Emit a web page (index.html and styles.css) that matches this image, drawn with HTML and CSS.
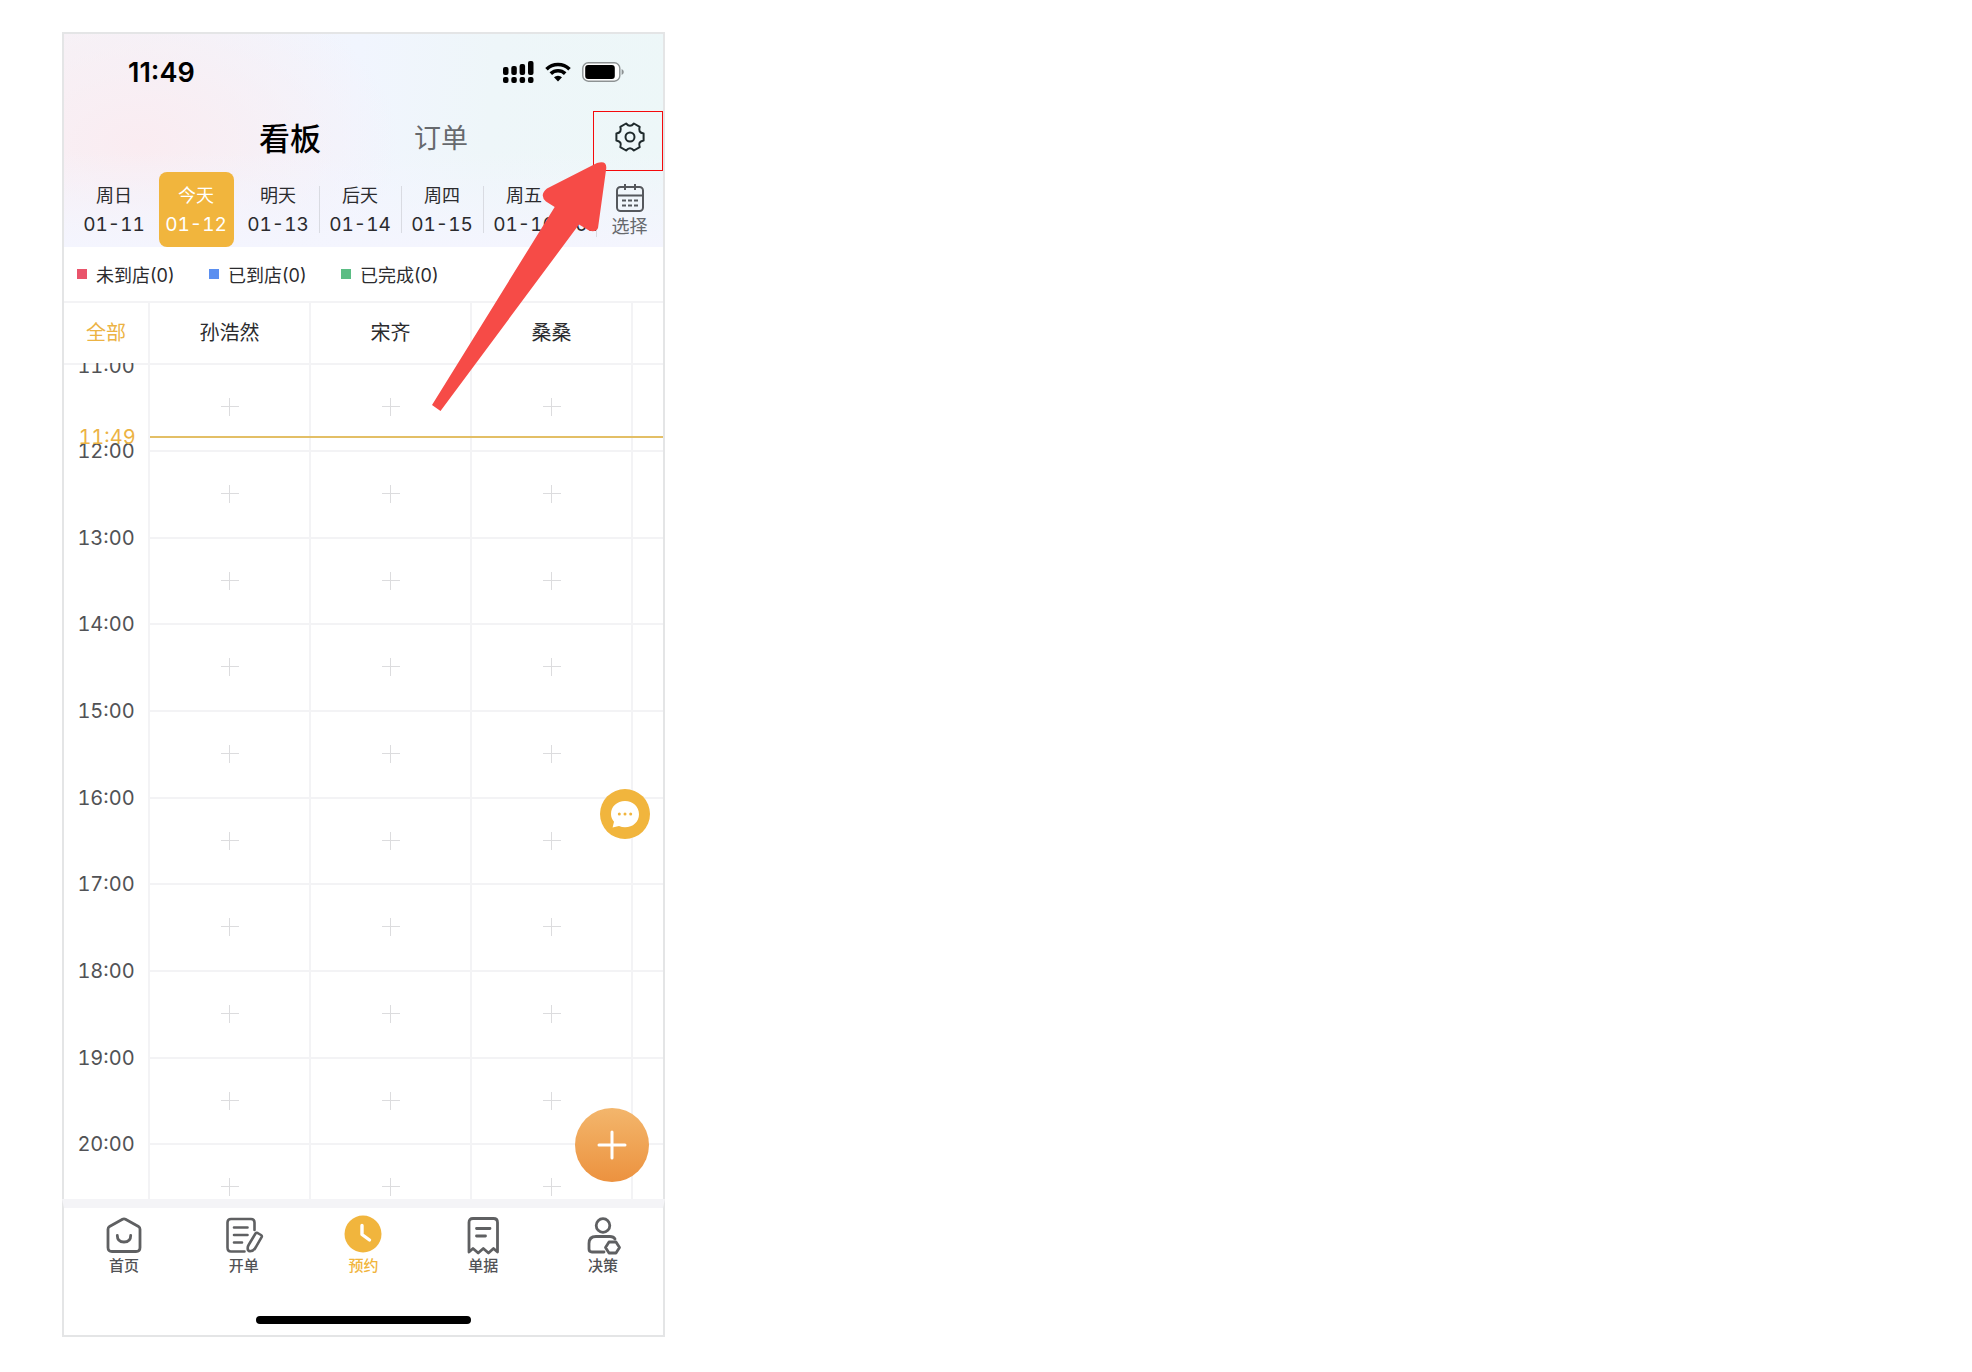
FILE: index.html
```html
<!DOCTYPE html>
<html lang="zh-CN">
<head>
<meta charset="utf-8">
<meta name="viewport" content="width=device-width, initial-scale=1">
<title>预约看板</title>
<link rel="stylesheet" href="styles.css">
</head>
<body>
<main class="phone">
  <header class="top">
    <div class="status">
      <span class="status-time">11:49</span>
      <span class="status-icons">
        <svg width="32" height="22" viewBox="0 0 32 22"><g fill="#000"><rect x="1" y="6" width="5.500" height="8" rx="2"/><rect x="9.300" y="5" width="5.500" height="9" rx="2"/><rect x="17.600" y="3" width="5.500" height="11" rx="2"/><rect x="26" y="0" width="5.500" height="14" rx="2"/><rect x="1" y="16" width="5.500" height="6" rx="2"/><rect x="9.300" y="16" width="5.500" height="6" rx="2"/><rect x="17.600" y="16" width="5.500" height="6" rx="2"/><rect x="26" y="16" width="5.500" height="6" rx="2"/></g></svg>
        <svg width="26" height="20" viewBox="0 0 26 20"><g fill="none" stroke="#000" stroke-width="3.6"><path d="M1.500 7.200a16.500 16.500 0 0 1 23 0"/><path d="M5.800 11.600a10.400 10.400 0 0 1 14.400 0"/></g><path d="M13 19.500l-4-4.200a5.800 5.800 0 0 1 8 0z" fill="#000"/></svg>
        <svg width="42" height="20" viewBox="0 0 42 20"><rect x="0.800" y="0.800" width="37" height="18.400" rx="5.500" fill="#fff" stroke="#8d9293" stroke-width="1.400"/><rect x="3.200" y="3" width="29.600" height="14" rx="3" fill="#000"/><path d="M39.600 7v6q2.200-1 2.200-3t-2.200-3z" fill="#8d9293"/></svg>
      </span>
    </div>
    <nav class="views">
      <button class="view view-on" type="button">看板</button>
      <button class="view" type="button">订单</button>
      <button class="gear" type="button" aria-label="设置">
        <svg width="30" height="30" viewBox="0 0 30 30" fill="none" stroke="#1f2a2c" stroke-width="2" stroke-linejoin="round"><path d="M18.900 1.500L24.700 4.900Q22.700 10.500 28.600 11.600V18.400Q22.700 19.500 24.700 25.100L18.900 28.500Q15 23.900 11.100 28.500L5.300 25.100Q7.300 19.500 1.400 18.400V11.600Q7.300 10.500 5.300 4.900L11.100 1.500Q15 6.100 18.900 1.500Z"/><circle cx="15" cy="15" r="4.500"/></svg>
      </button>
    </nav>
    <div class="days">
      <ul class="day-list">
        <li><button class="day" type="button"><span>周日</span><span class="num">01-11</span></button></li>
        <li><button class="day day-on" type="button"><span>今天</span><span class="num">01-12</span></button></li>
        <li><button class="day" type="button"><span>明天</span><span class="num">01-13</span></button></li>
        <li class="ruled"><button class="day" type="button"><span>后天</span><span class="num">01-14</span></button></li>
        <li class="ruled"><button class="day" type="button"><span>周四</span><span class="num">01-15</span></button></li>
        <li class="ruled"><button class="day" type="button"><span>周五</span><span class="num">01-16</span></button></li>
        <li class="ruled"><button class="day" type="button"><span>周六</span><span class="num">01-17</span></button></li>
      </ul>
      <button class="picker" type="button">
        <svg width="30" height="30" viewBox="0 0 30 30" fill="none" stroke="#55585d" stroke-width="2"><rect x="2" y="4" width="26" height="24" rx="3.500"/><path d="M2 12.500h26M10 1v6M20 1v6"/><path d="M7 17.500h4M13 17.500h4M19 17.500h4M7 22.500h4M13 22.500h4M19 22.500h4"/></svg>
        <span>选择</span>
      </button>
    </div>
  </header>

  <ul class="legend">
    <li class="waiting">未到店(0)</li>
    <li class="arrived">已到店(0)</li>
    <li class="done">已完成(0)</li>
  </ul>

  <section class="board">
    <table class="schedule">
      <colgroup><col class="col-time"><col class="col-staff"><col class="col-staff"><col class="col-staff"><col></colgroup>
      <thead>
        <tr><th class="all">全部</th><th>孙浩然</th><th>宋齐</th><th>桑桑</th><th></th></tr>
      </thead>
      <tbody>
        <tr><th><time>11:00</time></th><td><button type="button" aria-label="新增预约"></button></td><td><button type="button" aria-label="新增预约"></button></td><td><button type="button" aria-label="新增预约"></button></td><td></td></tr>
        <tr><th><time>12:00</time></th><td><button type="button" aria-label="新增预约"></button></td><td><button type="button" aria-label="新增预约"></button></td><td><button type="button" aria-label="新增预约"></button></td><td></td></tr>
        <tr><th><time>13:00</time></th><td><button type="button" aria-label="新增预约"></button></td><td><button type="button" aria-label="新增预约"></button></td><td><button type="button" aria-label="新增预约"></button></td><td></td></tr>
        <tr><th><time>14:00</time></th><td><button type="button" aria-label="新增预约"></button></td><td><button type="button" aria-label="新增预约"></button></td><td><button type="button" aria-label="新增预约"></button></td><td></td></tr>
        <tr><th><time>15:00</time></th><td><button type="button" aria-label="新增预约"></button></td><td><button type="button" aria-label="新增预约"></button></td><td><button type="button" aria-label="新增预约"></button></td><td></td></tr>
        <tr><th><time>16:00</time></th><td><button type="button" aria-label="新增预约"></button></td><td><button type="button" aria-label="新增预约"></button></td><td><button type="button" aria-label="新增预约"></button></td><td></td></tr>
        <tr><th><time>17:00</time></th><td><button type="button" aria-label="新增预约"></button></td><td><button type="button" aria-label="新增预约"></button></td><td><button type="button" aria-label="新增预约"></button></td><td></td></tr>
        <tr><th><time>18:00</time></th><td><button type="button" aria-label="新增预约"></button></td><td><button type="button" aria-label="新增预约"></button></td><td><button type="button" aria-label="新增预约"></button></td><td></td></tr>
        <tr><th><time>19:00</time></th><td><button type="button" aria-label="新增预约"></button></td><td><button type="button" aria-label="新增预约"></button></td><td><button type="button" aria-label="新增预约"></button></td><td></td></tr>
        <tr class="cut"><th><time>20:00</time></th><td><button type="button" aria-label="新增预约"></button></td><td><button type="button" aria-label="新增预约"></button></td><td><button type="button" aria-label="新增预约"></button></td><td></td></tr>
      </tbody>
    </table>
    <div class="now"><time>11:49</time></div>
    <button class="fab chat" type="button" aria-label="消息">
      <svg width="30" height="30" viewBox="0 0 30 30"><path d="M15 2C7 2 1 7.500 1 15c0 3 1.200 5.600 3 7.700L2.600 28.500 9 27c2 .900 4 1.300 6 1.300 8 0 14-5.600 14-13.100S23 2 15 2z" fill="#fff"/><g fill="#f1b53d"><circle cx="9.300" cy="15" r="1.500"/><circle cx="15" cy="15" r="1.500"/><circle cx="20.700" cy="15" r="1.500"/></g></svg>
    </button>
    <button class="fab add" type="button" aria-label="新增">
      <svg width="30" height="30" viewBox="0 0 30 30" stroke="#fff" stroke-width="3" stroke-linecap="round"><path d="M2 15h26M15 2v26"/></svg>
    </button>
  </section>

  <nav class="tabs">
    <a class="tab" href="#home">
      <svg width="38" height="38" viewBox="0 0 38 38" fill="none" stroke="#5f6062" stroke-width="2.800" stroke-linecap="round" stroke-linejoin="round"><path d="M17.500 3.200Q19 2.400 20.500 3.200L33.500 10.500Q35 11.400 35 13.200V31.500Q35 35.500 31 35.500H7Q3 35.500 3 31.500V13.200Q3 11.400 4.500 10.500Z"/><path d="M12.300 19.500Q12.300 26 19 26T25.700 19.500"/></svg>
      <span>首页</span>
    </a>
    <a class="tab" href="#open">
      <svg width="38" height="38" viewBox="0 0 38 38" fill="none" stroke="#5f6062" stroke-width="2.600" stroke-linecap="round" stroke-linejoin="round"><path d="M29.500 14V6.500Q29.500 3 26 3H6Q2.500 3 2.500 6.500V31.500Q2.500 35.500 6 35.500H19.500"/><path d="M9 11.500H22.500M9 19H22.500M9 26.500H17"/><path d="M30.500 17.500Q31.300 16.300 32.600 17L36 19Q37.300 19.800 36.600 21.200L30 32.500Q28.500 35 25 35.300Q22.500 35 22.700 32Q22.700 30.500 23.600 29Z"/></svg>
      <span>开单</span>
    </a>
    <a class="tab tab-on" href="#booking" aria-current="page">
      <svg width="38" height="38" viewBox="0 0 38 38" fill="none"><circle cx="19" cy="18" r="18.500" fill="#f1b53d"/><path d="M18 9.500V18.500L25.500 24" stroke="#fff" stroke-width="3.400" stroke-linecap="round" stroke-linejoin="round"/></svg>
      <span>预约</span>
    </a>
    <a class="tab" href="#bills">
      <svg width="38" height="38" viewBox="0 0 38 38" fill="none" stroke="#5f6062" stroke-width="2.800" stroke-linecap="round" stroke-linejoin="round"><path d="M5 36V6.500Q5 2.500 9 2.500H29.500Q33.500 2.500 33.500 6.500V36L29.500 32.500L24.500 37L19.300 32.500L14.200 37L9 32.500Z"/><path d="M12.500 12.500H26M12.500 20H21.500"/></svg>
      <span>单据</span>
    </a>
    <a class="tab" href="#decide">
      <svg width="38" height="38" viewBox="0 0 38 38" fill="none" stroke="#5f6062" stroke-width="2.800" stroke-linecap="round" stroke-linejoin="round"><circle cx="19" cy="9.500" r="6.800"/><path d="M31 23Q29.500 20.500 26 20.500H12Q5 20.500 5 27.500V33Q5 36 8 36H20"/><path d="M25 26H32L35.500 31.500L32 37H25L21.500 31.500Z"/></svg>
      <span>决策</span>
    </a>
  </nav>
  <div class="home-bar"></div>

  <div class="callout"></div>
  <svg class="arrow" width="180" height="255" viewBox="430 160 180 255" fill="#f64b47"><path d="M432 405L554.700 207L546 201.500Q539 195 547 188.500L597 163Q606.500 160 606.300 168L598 228Q596 232.500 589.500 230.800L579 224.500L440.500 411Z"/></svg>
</main>
</body>
</html>
```
FILE: styles.css
```css
* {
  box-sizing: border-box;
}

body {
  margin: 0;
  background: #fff;
  color: #2b2b2e;
  font-family: Inter, "Noto Sans CJK SC", sans-serif;
  font-size: 18px;
}

button {
  margin: 0;
  padding: 0;
  border: 0;
  background: none;
  color: inherit;
  font: inherit;
}

ul {
  margin: 0;
  padding: 0;
  list-style: none;
}

svg {
  display: block;
  overflow: visible;
}

.phone {
  position: relative;
  max-width: 603px;
  margin: 32px 62px;
  border: 2px solid #e4e5e6;
  background: #fff;
}

/* header */
.top {
  background:
    linear-gradient(to top, #f4f5fe 0%, #f4f5fe00 45%),
    radial-gradient(ellipse 260px 170px at 75px 110px, #faecf1 0%, #faecf100 100%),
    linear-gradient(95deg, #f5f3f8 0%, #f1f5fe 48%, #eef6f9 70%, #edf7f8 100%);
}

.status {
  display: flex;
  align-items: center;
  justify-content: space-between;
  height: 76px;
  padding: 0 39px 0 64px;
  color: #000;
}

.status-time {
  font-size: 27px;
  font-weight: 600;
}

.status-icons {
  display: flex;
  align-items: center;
  gap: 11px;
}

.views {
  display: grid;
  grid-template-columns: 1fr auto auto 1fr;
  align-items: center;
  height: 62px;
  padding-bottom: 9px;
  column-gap: 93px;
}

.view {
  grid-column: 3;
  grid-row: 1;
  color: #66696d;
  font-size: 27px;
}

.view-on {
  grid-column: 2;
  color: #000;
  font-size: 31px;
  font-weight: 500;
}

.gear {
  grid-column: 4;
  justify-self: end;
  margin-right: 18px;
}

.days {
  display: flex;
  padding-left: 9px;
}

.day-list {
  display: flex;
  flex: 1;
  min-width: 0;
  overflow: hidden;
}

.day-list li {
  position: relative;
  display: flex;
  flex: 0 0 82px;
  justify-content: center;
}

.ruled::before {
  content: "";
  position: absolute;
  top: 14px;
  bottom: 14px;
  left: 0;
  width: 1px;
  background: #d9dbe2;
}

.day {
  display: flex;
  flex-direction: column;
  align-items: center;
  width: 75px;
  height: 75px;
  padding-top: 9px;
  border-radius: 8px;
  line-height: 29px;
}

.day-on {
  background: #f1b53d;
  color: #fff;
}

.num {
  font-size: 19px;
  font-variant-numeric: tabular-nums;
}

.picker {
  display: flex;
  flex-direction: column;
  align-items: center;
  width: 67px;
  padding-top: 11px;
  background: linear-gradient(#d9dbe2, #d9dbe2) 0 14px / 1px 51px no-repeat;
  color: #66696d;
  line-height: 28px;
}

/* legend */
.legend {
  display: flex;
  height: 54px;
  padding-left: 13px;
}

.legend li {
  display: flex;
  flex: 0 0 132px;
  align-items: center;
  gap: 9px;
}

.legend li::before {
  content: "";
  width: 10px;
  height: 10px;
}

.waiting::before {
  background: #e9546b;
}

.arrived::before {
  background: #5b8ff0;
}

.done::before {
  background: #5bbd84;
}

/* schedule */
.board {
  position: relative;
  overflow: hidden;
}

.schedule {
  width: 100%;
  border-spacing: 0;
  table-layout: fixed;
}

.col-time {
  width: 86px;
}

.col-staff {
  width: 161px;
}

.schedule th,
.schedule td {
  height: 87px;
  padding: 0;
  border-right: 2px solid #f3f3f5;
  font-weight: 400;
  vertical-align: top;
}

.schedule th:last-child,
.schedule td:last-child {
  border-right: 0;
}

.schedule td {
  border-top: 2px solid #f3f3f5;
}

.schedule tr:nth-child(3n) > * {
  height: 86px;
}

.schedule .cut > * {
  height: 56px;
}

.schedule thead th {
  position: relative;
  z-index: 1;
  height: 62px;
  padding-bottom: 3px;
  border-top: 2px solid #f3f3f5;
  background: #fff;
  font-size: 20px;
  vertical-align: middle;
}

.schedule thead .all {
  color: #ecb344;
}

.schedule tbody th {
  color: #515255;
  font-size: 20px;
}

.schedule tbody tr:first-child th {
  border-top: 2px solid #f3f3f5;
}

.schedule time {
  display: block;
  height: 24px;
  margin-top: -12px;
  line-height: 26px;
  font-variant-numeric: tabular-nums;
}

.schedule td button {
  display: block;
  width: 18px;
  height: 18px;
  margin: 33px auto -18px;
  background:
    linear-gradient(#dcdcde, #dcdcde) 8px 8px / 1px 18px repeat-y,
    linear-gradient(#dcdcde, #dcdcde) 0 8px / 18px 1px no-repeat;
}

.now {
  position: absolute;
  top: 124px;
  right: 0;
  left: 0;
  display: flex;
  align-items: center;
  height: 24px;
  color: #ecb344;
  font-size: 20px;
  font-variant-numeric: tabular-nums;
}

.now time {
  width: 86px;
  text-align: center;
}

.now::after {
  content: "";
  flex: 1;
  height: 2px;
  background: #e3bf66;
}

.fab {
  position: absolute;
  display: grid;
  place-items: center;
  border-radius: 50%;
}

.chat {
  right: 13px;
  bottom: 360px;
  width: 50px;
  height: 50px;
  background: #f1b53d;
}

.add {
  right: 14px;
  bottom: 17px;
  width: 74px;
  height: 74px;
  background: linear-gradient(#f3b66c, #ec923f);
}

/* bottom tabs */
.tabs {
  display: flex;
  margin: 0 -2px;
  border-top: 9px solid #f4f4f7;
  border-right: 2px solid #e4e5e6;
  border-left: 2px solid #e4e5e6;
  padding-top: 8px;
}

.tab {
  display: flex;
  flex: 1;
  flex-direction: column;
  align-items: center;
  color: #515255;
  font-size: 15px;
  font-weight: 500;
  line-height: 24px;
  text-decoration: none;
}

.tab-on {
  color: #f1b53d;
}

.home-bar {
  width: 215px;
  height: 8px;
  margin: 38px auto 11px;
  border-radius: 4px;
  background: #000;
}

/* annotation over the screen */
.callout {
  position: absolute;
  z-index: 2;
  top: 77px;
  right: 0;
  width: 70px;
  height: 60px;
  border: 1px solid #f5090b;
}

.arrow {
  position: absolute;
  z-index: 2;
  top: 126px;
  left: 366px;
}
```
